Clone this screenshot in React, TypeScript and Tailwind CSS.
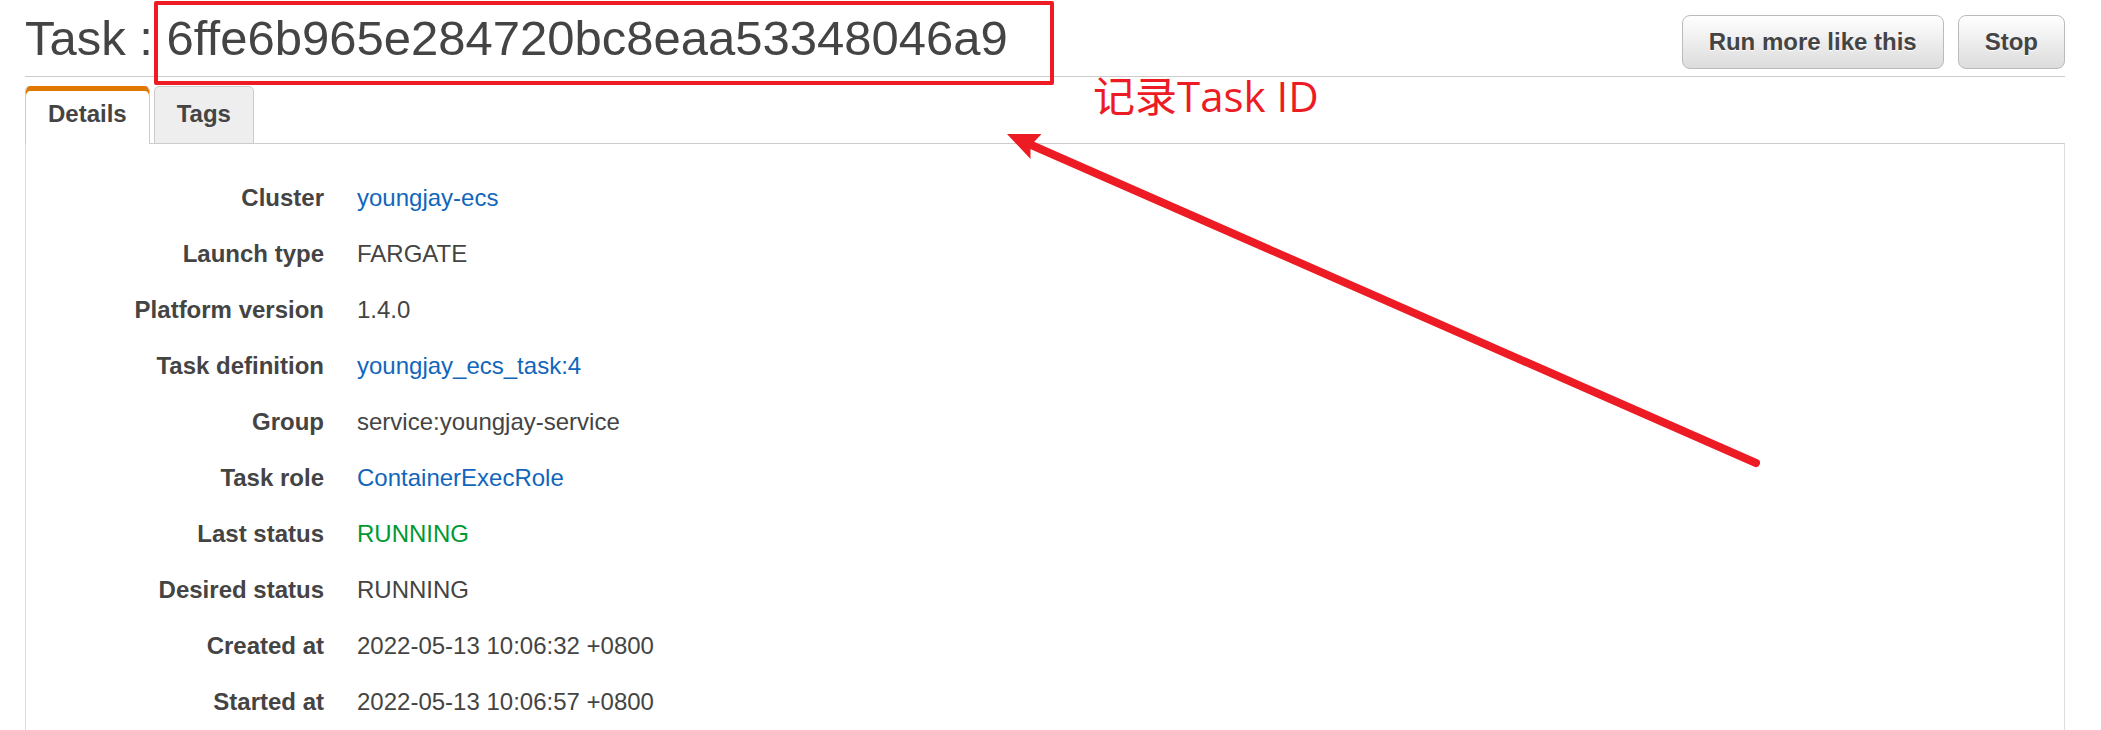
import React from 'react';

type Detail = { label: string; value: string; kind?: 'link' | 'ok' };

const details: Detail[] = [
  { label: 'Cluster', value: 'youngjay-ecs', kind: 'link' },
  { label: 'Launch type', value: 'FARGATE' },
  { label: 'Platform version', value: '1.4.0' },
  { label: 'Task definition', value: 'youngjay_ecs_task:4', kind: 'link' },
  { label: 'Group', value: 'service:youngjay-service' },
  { label: 'Task role', value: 'ContainerExecRole', kind: 'link' },
  { label: 'Last status', value: 'RUNNING', kind: 'ok' },
  { label: 'Desired status', value: 'RUNNING' },
  { label: 'Created at', value: '2022-05-13 10:06:32 +0800' },
  { label: 'Started at', value: '2022-05-13 10:06:57 +0800' },
];

function ActionButton({ children }: { children: React.ReactNode }) {
  return (
    <button
      type="button"
      className="h-[54px] whitespace-nowrap rounded-lg border border-[#bbb] bg-linear-to-b from-white to-[#dcdcdc] px-[26px] font-bold [text-shadow:0_1px_1px_#fff]"
    >
      {children}
    </button>
  );
}

function DetailValue({ value, kind }: Detail) {
  if (kind === 'link') {
    return (
      <a href="#" className="text-[#1166bb]">
        {value}
      </a>
    );
  }
  return <span className={kind === 'ok' ? 'text-[#009933]' : ''}>{value}</span>;
}

// Hand-drawn style marks that lie over the page: box, note and arrow.
function Annotations() {
  return (
    <div className="pointer-events-none absolute inset-0">
      <div className="absolute left-[154px] top-px h-[84px] w-[900px] rounded-[2px] border-4 border-[#ed1c24]" />
      <p className="absolute left-[1093px] top-[68px] whitespace-nowrap font-['Open_Sans','Noto_Sans_CJK_SC',sans-serif] text-[42px] leading-[56px] text-[#ed1c24]">
        记录Task ID
      </p>
      <svg
        className="absolute left-[1000px] top-[130px]"
        width="770"
        height="345"
        viewBox="0 0 770 345"
        fill="none"
        aria-hidden="true"
      >
        <path d="M29 14 L756 333" stroke="#ed1c24" strokeWidth="8" strokeLinecap="round" />
        <path d="M7 4 H41.5 L34 12 L30.5 19 V29 Z" fill="#ed1c24" />
      </svg>
    </div>
  );
}

export default function App() {
  return (
    <main className="relative flex h-screen flex-col overflow-hidden bg-white pl-[25px] pr-9 font-['Liberation_Sans',Arial,sans-serif] text-[24px] text-[#444]">
      <header className="flex shrink-0 items-start justify-between border-b border-[#ccc]">
        <h1 className="whitespace-nowrap text-[49px] leading-[76px]">
          Task : 6ffe6b965e284720bc8eaa53348046a9
        </h1>
        <div className="flex gap-3.5 pt-[15px]">
          <ActionButton>Run more like this</ActionButton>
          <ActionButton>Stop</ActionButton>
        </div>
      </header>

      <div role="tablist" className="z-10 mt-[9px] -mb-px flex shrink-0 gap-1 font-bold">
        <button
          type="button"
          role="tab"
          aria-selected="true"
          className="h-[58px] overflow-hidden rounded-t-[5px] border-x border-[#ccc] bg-white px-[22px] pb-0.5 shadow-[inset_0_5px_0_#e07700]"
        >
          Details
        </button>
        <button
          type="button"
          role="tab"
          aria-selected="false"
          className="h-[58px] rounded-t-[5px] border border-[#ccc] bg-[#eee] px-[22px] pb-0.5"
        >
          Tags
        </button>
      </div>

      <section className="flex-1 border-x border-t border-x-[#ddd] border-t-[#ccc] pt-[26px]">
        <dl className="grid grid-cols-[298px_1fr] gap-x-[33px] leading-[56px]">
          {details.map((d) => (
            <React.Fragment key={d.label}>
              <dt className="text-right font-bold">{d.label}</dt>
              <dd>
                <DetailValue {...d} />
              </dd>
            </React.Fragment>
          ))}
        </dl>
      </section>

      <Annotations />
    </main>
  );
}
